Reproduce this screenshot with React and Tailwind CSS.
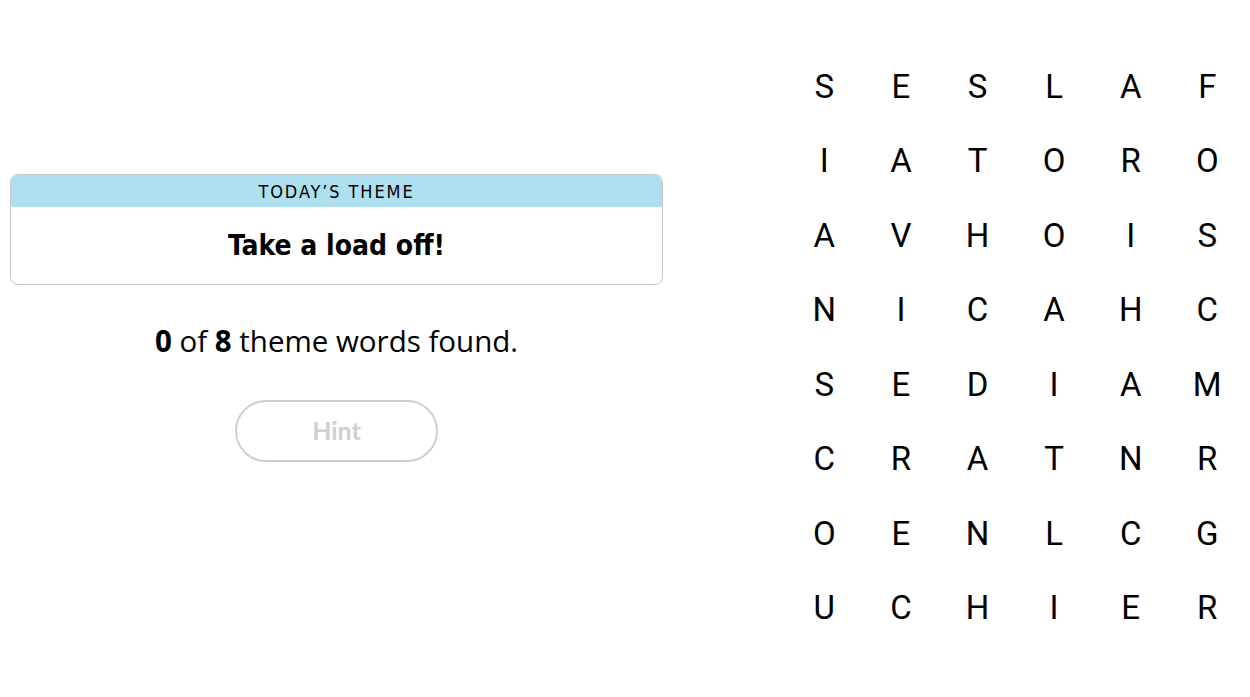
import React from "react";

const ROWS = [
  "SESLAF",
  "IATORO",
  "AVHOIS",
  "NICAHC",
  "SEDIAM",
  "CRATNR",
  "OENLCG",
  "UCHIER",
];

const COND = '"DejaVu Sans Condensed", "DejaVu Sans", sans-serif';

export default function App() {
  return (
    <div className="flex h-[697px] w-[1250px] bg-white text-black">
      <div className="ml-[10px] flex w-[653px] flex-col items-center pt-[174px]">
        <div className="w-full overflow-hidden rounded-[8px] border border-[#c8c8c8]">
          <div
            className="flex h-[32px] items-center justify-center bg-[#aedfee] text-[18px] uppercase tracking-[1.9px]"
            style={{ fontFamily: COND }}
          >
            Today’s Theme
          </div>
          <div
            className="flex h-[77px] items-center justify-center text-[28px] font-bold"
            style={{ fontFamily: COND }}
          >
            Take a load off!
          </div>
        </div>
        <p className="mt-[38px] text-[29.5px] leading-[36px]" style={{ fontFamily: '"Open Sans", sans-serif' }}>
          <span className="font-bold">0</span> of <span className="font-bold">8</span> theme words found.
        </p>
        <button
          className="mt-[41px] flex h-[62px] w-[203px] items-center justify-center rounded-full border-2 border-[#cfcfcf] text-[25px] font-bold text-[#d0d0d0]"
          style={{ fontFamily: 'Lato, sans-serif' }}
        >
          Hint
        </button>
      </div>
      <div className="ml-[123px] pt-[49px]">
        <div className="grid grid-cols-[repeat(6,76.6px)] auto-rows-[74.5px]">
          {ROWS.flatMap((row, r) =>
            row.split("").map((ch, c) => (
              <div
                key={`${r}-${c}`}
                className="flex items-center justify-center text-[33px] leading-none"
                style={{ fontFamily: 'Roboto, sans-serif' }}
              >
                {ch}
              </div>
            ))
          )}
        </div>
      </div>
    </div>
  );
}
